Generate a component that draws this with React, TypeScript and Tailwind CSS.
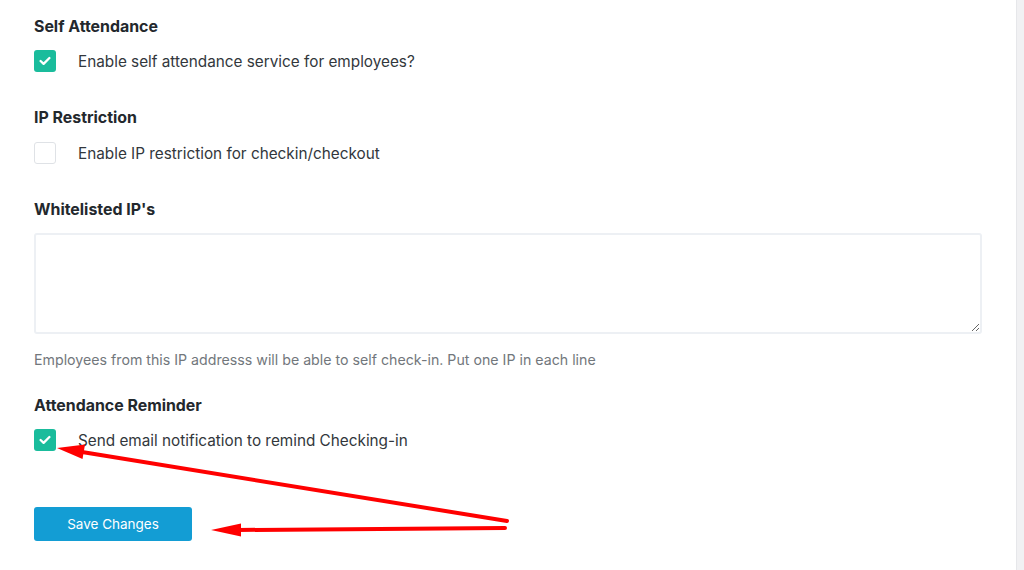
import React from 'react';

const CheckBox = ({ checked }: { checked: boolean }) => (
  <span
    className={
      checked
        ? 'flex h-[22px] w-[22px] shrink-0 items-center justify-center rounded-[3px] bg-[#1abc9c]'
        : 'flex h-[22px] w-[22px] shrink-0 items-center justify-center rounded-[3px] border border-[#dfe2e6] bg-white'
    }
  >
    {checked && (
      <svg width="12" height="10" viewBox="0 0 12 10" fill="none">
        <path
          d="M1.6 5 L4.6 7.9 L10.4 2"
          stroke="#ffffff"
          strokeWidth="2.3"
          strokeLinecap="round"
          strokeLinejoin="round"
        />
      </svg>
    )}
  </span>
);

const CheckRow = ({ checked, label }: { checked: boolean; label: string }) => (
  <label className="flex h-[22px] items-center gap-[22px]">
    <CheckBox checked={checked} />
    <span className="translate-y-px text-[15.3px] leading-[22px] text-[#32373c]">{label}</span>
  </label>
);

const Heading = ({ children }: { children: React.ReactNode }) => (
  <h3 className="text-[15.9px] font-bold leading-5 text-[#23282d]">{children}</h3>
);

const Arrows = () => (
  <svg
    className="pointer-events-none absolute inset-0"
    width="1024"
    height="570"
    viewBox="0 0 1024 570"
  >
    <line x1="507" y1="521" x2="82" y2="452" stroke="#ff0000" strokeWidth="4" strokeLinecap="round" />
    <polygon points="57,448 85,444.5 82.5,459" fill="#ff0000" />
    <line x1="505" y1="528" x2="238" y2="530" stroke="#ff0000" strokeWidth="4" strokeLinecap="round" />
    <polygon points="211,530 241,523.5 241,536.5" fill="#ff0000" />
  </svg>
);

export default function App() {
  return (
    <div
      className="relative flex h-[570px] w-full overflow-hidden bg-white"
      style={{ fontFamily: 'Inter, "Noto Sans", sans-serif' }}
    >
      <main className="flex flex-1 flex-col px-[34px] pt-[17px]">
        <Heading>Self Attendance</Heading>
        <div className="mt-[13px]">
          <CheckRow checked label="Enable self attendance service for employees?" />
        </div>

        <div className="mt-9">
          <Heading>IP Restriction</Heading>
        </div>
        <div className="mt-[14px]">
          <CheckRow checked={false} label="Enable IP restriction for checkin/checkout" />
        </div>

        <div className="mt-9">
          <Heading>Whitelisted IP's</Heading>
        </div>
        <textarea className="mt-[13px] h-[101px] w-full resize-y rounded-[3px] border-2 border-[#edf0f4] bg-white outline-none" />
        <p className="mt-[16px] text-[14.2px] leading-5 text-[#72777c]">
          Employees from this IP addresss will be able to self check-in. Put one IP in each line
        </p>

        <div className="mt-[26px]">
          <Heading>Attendance Reminder</Heading>
        </div>
        <div className="mt-[13px]">
          <CheckRow checked label="Send email notification to remind Checking-in" />
        </div>

        <div className="mt-[56px]">
          <button className="h-[34px] w-[158px] rounded-[3px] bg-[#139dd4] text-[13.5px] text-white">
            Save Changes
          </button>
        </div>
      </main>
      <div className="w-2 shrink-0 border-l border-[#e6e7ea] bg-[#f1f1f3]" />
      <Arrows />
    </div>
  );
}
